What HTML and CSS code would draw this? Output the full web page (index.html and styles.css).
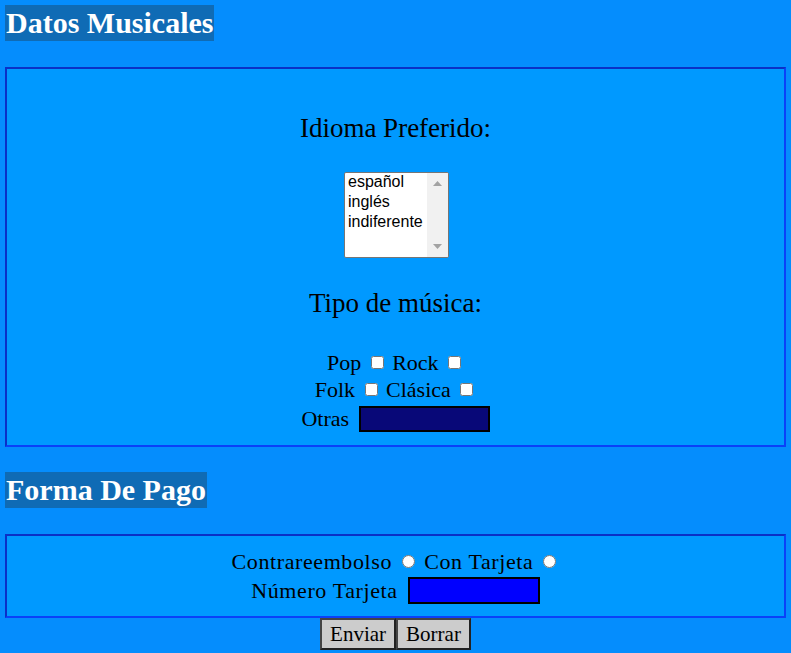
FILE: index.html
```html
<!DOCTYPE html>
<html lang="es">
<head>
<meta charset="utf-8">
<title>Formulario</title>
<link rel="stylesheet" href="styles.css">
</head>
<body>
<form class="form">
  <h2 class="section-title">Datos Musicales</h2>
  <fieldset class="box box-music">
    <div class="label-big">Idioma Preferido:</div>
    <div class="lang-wrap">
      <select class="lang" size="4">
        <option>español</option>
        <option>inglés</option>
        <option>indiferente</option>
      </select>
      <div class="scrollbar" aria-hidden="true">
        <svg class="arrow" width="9" height="5" viewBox="0 0 9 5"><polygon points="0,5 9,5 4.5,0" fill="#a3a3a3"/></svg>
        <svg class="arrow" width="9" height="5" viewBox="0 0 9 5"><polygon points="0,0 9,0 4.5,5" fill="#a3a3a3"/></svg>
      </div>
    </div>
    <div class="label-big label-tipo">Tipo de música:</div>
    <div class="row row-first">Pop <input type="checkbox" class="check"> Rock <input type="checkbox" class="check"></div>
    <div class="row">Folk <input type="checkbox" class="check"> Clásica <input type="checkbox" class="check"></div>
    <div class="row row-input">Otras <input type="text" class="text text-otras"></div>
  </fieldset>

  <h2 class="section-title">Forma De Pago</h2>
  <fieldset class="box box-pay">
    <div class="row">Contrareembolso <input type="radio" name="pago" class="radio"> Con Tarjeta <input type="radio" name="pago" class="radio"></div>
    <div class="row row-input">Número Tarjeta <input type="text" class="text text-card"></div>
  </fieldset>
  <div class="buttons">
    <button type="submit" class="btn">Enviar</button><button type="reset" class="btn">Borrar</button>
  </div>
</form>
</body>
</html>
```
FILE: styles.css
```css
html, body {
  background: #058dfd;
}
body {
  margin: 5px;
  font-family: "Liberation Serif", "Times New Roman", serif;
  color: #000;
}
.form {
  display: flex;
  flex-direction: column;
  align-items: flex-start;
}
.section-title {
  display: inline-block;
  margin: 0;
  padding: 0 1px;
  background: #0f6bb5;
  color: #fff;
  font-size: 30px;
  line-height: 36px;
  font-weight: bold;
}
.box {
  align-self: stretch;
  margin: 26px 0 0 0;
  padding: 0;
  min-width: 0;
  background: #0099ff;
  border-style: solid;
  border-width: 2px;
  border-color: #0b30c6 #0a41f8 #0a41f8 #0b30c6;
  display: flex;
  flex-direction: column;
  align-items: center;
  font-size: 22px;
}
.box-music {
  padding: 43px 0 12px;
}
.box-pay {
  padding: 12px 0 11px;
  letter-spacing: 0.6px;
}
.box + .section-title {
  margin-top: 25px;
}
.label-big {
  font-size: 27px;
  line-height: 32px;
}
.lang-wrap {
  margin: 28px 0 0 2px;
  width: 105px;
  height: 86px;
  box-sizing: border-box;
  display: flex;
  border: 1px solid #767676;
  border-radius: 2px;
  background: #fff;
  overflow: hidden;
}
.lang {
  flex: 1;
  min-width: 0;
  height: 100%;
  font-family: "Liberation Sans", Arial, sans-serif;
  font-size: 16px;
  border: 0;
  outline: 0;
  background: #fff;
  color: #000;
  padding: 0 0 0 1px;
  overflow: hidden;
}
.scrollbar {
  width: 21px;
  flex: none;
  background: #f1f1f1;
  display: flex;
  flex-direction: column;
  align-items: center;
  justify-content: space-between;
  padding: 8px 0 8px;
}
.arrow {
  display: block;
}
.label-tipo {
  margin-top: 29px;
}
.row {
  line-height: 27px;
  height: 27px;
  display: flex;
  align-items: center;
  white-space: pre;
}
.row-first {
  margin-top: 30px;
}
.row-input {
  height: 29px;
  margin-top: 1px;
}
.check, .radio {
  width: 13px;
  height: 13px;
  margin: 0 3px 0 4px;
}
.text {
  box-sizing: border-box;
  height: 26px;
  border: 2px solid #000;
  margin: 0 0 0 4px;
  padding: 0;
}
.text-otras {
  width: 131px;
  background: #080878;
}
.text-card {
  width: 132px;
  height: 27px;
  background: #0000ff;
}
.buttons {
  align-self: stretch;
  display: flex;
  justify-content: center;
  margin-top: 0;
}
.btn {
  font-family: "Liberation Serif", "Times New Roman", serif;
  font-size: 21px;
  height: 32px;
  padding: 0 8px;
  background: #cccccc;
  color: #000;
  border: 2px solid;
  border-color: #444 #222 #222 #444;
  border-radius: 0;
}
```
